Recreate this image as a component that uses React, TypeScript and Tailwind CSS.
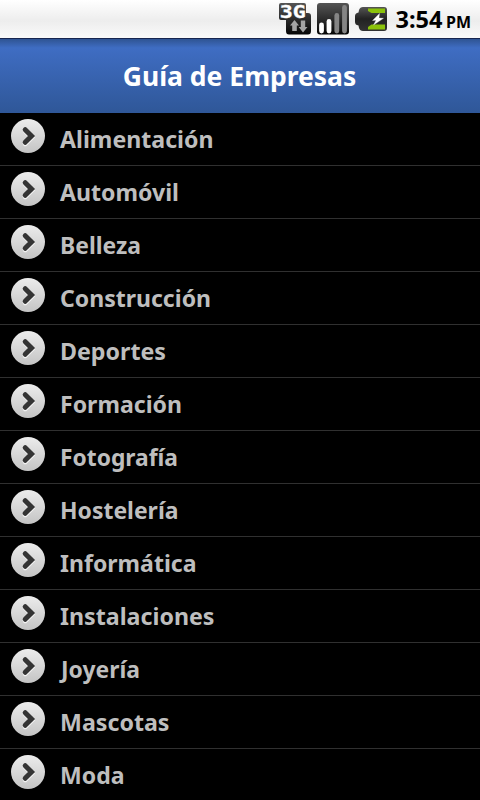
import React from "react";

const categories = [
  { name: "Alimentación", width: 153.5 },
  { name: "Automóvil", width: 119 },
  { name: "Belleza", width: 81 },
  { name: "Construcción", width: 151 },
  { name: "Deportes", width: 106 },
  { name: "Formación", width: 122 },
  { name: "Fotografía", width: 118 },
  { name: "Hostelería", width: 118.5 },
  { name: "Informática", width: 136.5 },
  { name: "Instalaciones", width: 154.5 },
  { name: "Joyería", width: 79, offset: 1 },
  { name: "Mascotas", width: 109.5 },
  { name: "Moda", width: 64.5 },
];

function NetworkIcon() {
  return (
    <svg width="34" height="34" viewBox="278 2 34 34" className="shrink-0">
      <defs>
        <linearGradient id="net" x1="0" y1="0" x2="0" y2="1">
          <stop offset="0" stopColor="#555" />
          <stop offset="1" stopColor="#050505" />
        </linearGradient>
      </defs>
      <path
        d="M281 3H304Q306 3 306 5V13H308Q311 13 311 16V31Q311 34.500 308 34.500H289Q286 34.500 286 31V20H281Q279 20 279 18V5Q279 3 281 3Z"
        fill="url(#net)"
      />
      <text
        x="279.800"
        y="17.800"
        fill="#fff"
        stroke="#fff"
        strokeWidth="0.3"
        fontSize="17.500"
        fontWeight="700"
        fontFamily="'DejaVu Sans Mono', monospace"
        textLength="26"
        lengthAdjust="spacingAndGlyphs"
      >
        3G
      </text>
      <path d="M294.500 20L299 25.500H296.800V31H292.200V25.500H290Z" fill="#a5a5a5" />
      <path d="M303 32.500L298.700 27H300.800V20.500H305.200V27H307.500Z" fill="#a5a5a5" />
    </svg>
  );
}

function SignalIcon() {
  return (
    <svg width="34" height="34" viewBox="316 2 34 34" className="shrink-0">
      <rect x="317" y="3" width="32" height="31.500" rx="3" fill="url(#net)" />
      <g strokeWidth="4.800" strokeLinecap="round">
        <path d="M321.500 25V31" stroke="#fff" />
        <path d="M329 21.500V31" stroke="#fff" />
        <path d="M336.800 15.500V31" stroke="#858585" />
        <path d="M344.500 7.500V31" stroke="#858585" />
      </g>
    </svg>
  );
}

function BatteryIcon() {
  return (
    <svg width="34" height="34" viewBox="354 2 34 34" className="shrink-0">
      <defs>
        <linearGradient id="cell" x1="0" y1="0" x2="0" y2="1">
          <stop offset="0" stopColor="#555" />
          <stop offset="0.5" stopColor="#222" />
          <stop offset="1" stopColor="#333" />
        </linearGradient>
      </defs>
      <path
        d="M363 7H384Q387 7 387 10V28Q387 31 384 31H363Q360 31 359 28L358.500 25.500Q355 25 355 22V16Q355 13 358.500 12.500L359 10Q360 7 363 7Z"
        fill="url(#cell)"
      />
      <path d="M368 8.500H385V13H371.500L368 11Z" fill="#8bc30b" />
      <path d="M368 29.500H385V24.500H371.500L368 27Z" fill="#8bc30b" />
      <path d="M379.500 13.500L372.500 20.500L376 20.300L373.500 25L383.500 18.300L379 18Z" fill="#fff" stroke="#fff" strokeWidth="0.3" />
    </svg>
  );
}

function StatusBar() {
  return (
    <header className="flex h-[38px] bg-gradient-to-b from-white via-[#ededed] via-55% to-[#fafafa] pl-[278px] pt-0.5">
      <div className="flex gap-1">
        <NetworkIcon />
        <SignalIcon />
        <BatteryIcon />
      </div>
      <svg width="92" height="34" viewBox="388 2 92 34" className="shrink-0" fontFamily="'Noto Sans', sans-serif" fontWeight="700">
        <text x="395.500" y="28" fontSize="24" textLength="47" lengthAdjust="spacingAndGlyphs">
          3:54
        </text>
        <text x="446" y="28" fontSize="16" textLength="25" lengthAdjust="spacingAndGlyphs">
          PM
        </text>
      </svg>
    </header>
  );
}

function ArrowBadge() {
  return (
    <svg width="34" height="34" viewBox="0 0 34 34" className="mt-1.5 shrink-0">
      <defs>
        <linearGradient id="badge" x1="0" y1="0" x2="0" y2="1">
          <stop offset="0" stopColor="#ececec" />
          <stop offset="1" stopColor="#c4c4c4" />
        </linearGradient>
      </defs>
      <circle cx="17" cy="17" r="17" fill="url(#badge)" />
      <g fill="none" strokeWidth="5" strokeLinecap="round">
        <path d="M14.200 11.700L20.700 18.200L14.200 24.700" stroke="#f4f4f4" />
        <path d="M14.200 10.700L20.500 17L14.200 23.300" stroke="#343434" />
      </g>
    </svg>
  );
}

export default function App() {
  return (
    <div className="h-[800px] w-[480px] overflow-hidden bg-black font-['Noto_Sans',sans-serif] font-bold">
      <StatusBar />
      <div className="flex h-[75px] justify-center border-t border-[#17264f] bg-gradient-to-b from-[#2f5493] via-[#3f6dc3] via-12% to-[#2f5798]">
        <svg width="236" height="74" viewBox="122 39 236 74">
          <text x="122.800" y="86" fill="#fff" fontSize="26" textLength="233.500" lengthAdjust="spacingAndGlyphs">
            Guía de Empresas
          </text>
        </svg>
      </div>
      <ul>
        {categories.map((cat) => (
          <li key={cat.name} className="flex h-[53px] border-b border-[#303030] pl-[11px]">
            <ArrowBadge />
            <svg width="200" height="52" className="ml-[15px] overflow-visible">
              <text
                x={cat.offset ?? 0}
                y="35"
                fill="#bebebe"
                fontSize="24"
                textLength={cat.width}
                lengthAdjust="spacingAndGlyphs"
              >
                {cat.name}
              </text>
            </svg>
          </li>
        ))}
      </ul>
    </div>
  );
}
